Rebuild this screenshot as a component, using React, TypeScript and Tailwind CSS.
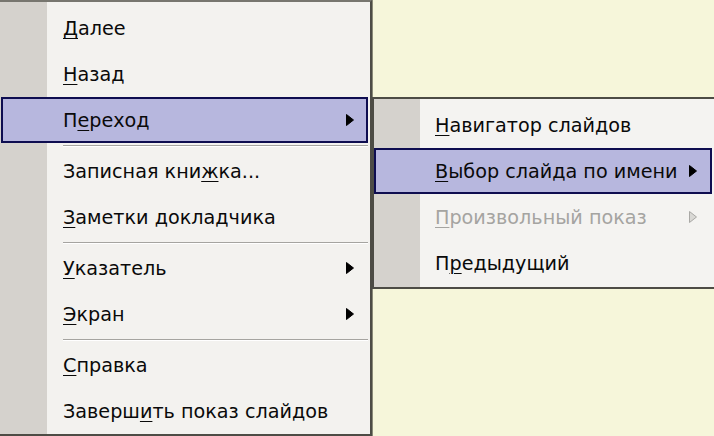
import React from 'react';

type Item =
  | { kind: 'sep' }
  | {
      kind: 'item';
      pre: string;
      key: string;
      post: string;
      arrow?: boolean;
      active?: boolean;
      disabled?: boolean;
    };

const mainItems: Item[] = [
  { kind: 'item', pre: '', key: 'Д', post: 'алее' },
  { kind: 'item', pre: '', key: 'Н', post: 'азад' },
  { kind: 'item', pre: 'П', key: 'е', post: 'реход', arrow: true, active: true },
  { kind: 'sep' },
  { kind: 'item', pre: 'Записная кни', key: 'ж', post: 'ка...' },
  { kind: 'item', pre: '', key: 'З', post: 'аметки докладчика' },
  { kind: 'sep' },
  { kind: 'item', pre: '', key: 'У', post: 'казатель', arrow: true },
  { kind: 'item', pre: '', key: 'Э', post: 'кран', arrow: true },
  { kind: 'sep' },
  { kind: 'item', pre: '', key: 'С', post: 'правка' },
  { kind: 'item', pre: 'Заверш', key: 'и', post: 'ть показ слайдов' },
];

const subItems: Item[] = [
  { kind: 'item', pre: '', key: 'Н', post: 'авигатор слайдов' },
  { kind: 'item', pre: '', key: 'В', post: 'ыбор слайда по имени', arrow: true, active: true },
  { kind: 'item', pre: '', key: 'П', post: 'роизвольный показ', arrow: true, disabled: true },
  { kind: 'item', pre: 'П', key: 'р', post: 'едыдущий' },
];

function Arrow({ disabled }: { disabled?: boolean }) {
  return (
    <svg width="8" height="12" viewBox="0 0 8 12" className="shrink-0">
      <path
        d="M0.5 0.5 L7.5 6 L0.5 11.5 Z"
        fill={disabled ? '#d9d8d5' : '#000'}
        stroke={disabled ? '#a9a8a5' : '#000'}
        strokeWidth="1"
      />
    </svg>
  );
}

function MenuRows({ items, pl, pr, ml, mr }: { items: Item[]; pl: string; pr: string; ml: string; mr: string }) {
  return (
    <>
      {items.map((it, i) =>
        it.kind === 'sep' ? (
          <div key={i} className="h-[5px] flex flex-col justify-center pl-[63px] pr-[2px]">
            <div className="h-px bg-[#a5a4a0]" />
            <div className="h-px bg-white" />
          </div>
        ) : (
          <div
            key={i}
            className={`h-[46px] flex items-center border-2 ${ml} ${mr} ${pl} ${pr} ${
              it.active ? 'bg-[#b7b7de] border-[#0e0d50]' : 'border-transparent'
            } ${it.disabled ? 'text-[#a5a4a1]' : 'text-[#0a0a0a]'}`}
          >
            <span className="flex-1 whitespace-nowrap pt-[2px]">
              {it.pre}
              <span className="underline underline-offset-[3px] decoration-1">{it.key}</span>
              {it.post}
            </span>
            {it.arrow && <Arrow disabled={it.disabled} />}
          </div>
        )
      )}
    </>
  );
}

export default function App() {
  return (
    <div
      className="relative w-[714px] h-[436px] overflow-hidden bg-[#f6f6da] flex text-[19.2px] leading-none"
      style={{ fontFamily: '"DejaVu Sans", Tahoma, sans-serif' }}
    >
      <div className="w-[372px] h-[436px] shrink-0 flex flex-col border-t-2 border-r-2 border-b-2 border-t-[#77766f] border-r-[#4d4c45] border-b-[#4d4c45] pt-[3px] bg-[linear-gradient(to_right,#d5d2cd_47px,#f3f2ef_47px)]">
        <MenuRows items={mainItems} pl="pl-[60px]" pr="pr-[12px]" ml="ml-[1px]" mr="mr-[2px]" />
      </div>
      <div className="flex-1 border-l border-[#8a8a78]" />

      <div className="absolute left-[372px] top-[97px] w-[344px] h-[192px] border-2 border-[#4d4c45] pt-[3px] bg-[linear-gradient(to_right,#d5d2cd_46px,#f4f3f1_46px)]">
        <MenuRows items={subItems} pl="pl-[59px]" pr="pr-[13px]" ml="ml-0" mr="mr-[2px]" />
      </div>
    </div>
  );
}
